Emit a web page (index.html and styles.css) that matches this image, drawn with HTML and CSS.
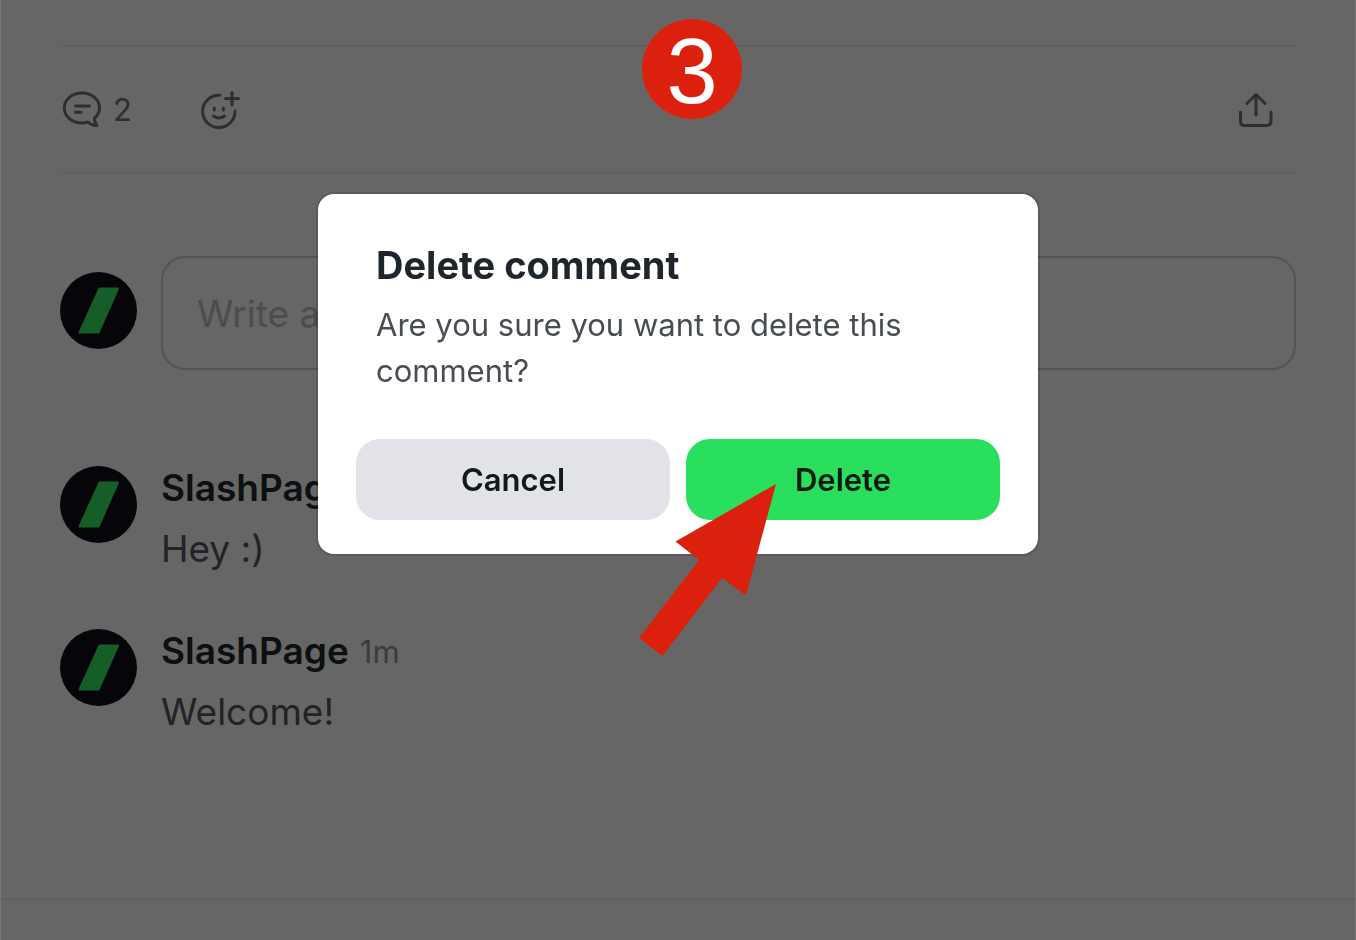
FILE: index.html
```html
<!DOCTYPE html>
<html lang="en">
<head>
<meta charset="utf-8">
<meta name="viewport" content="width=device-width, initial-scale=1">
<title>Delete comment</title>
<link rel="stylesheet" href="styles.css">
</head>
<body>
<svg class="defs" aria-hidden="true">
  <symbol id="slash" viewBox="0 0 77 77">
    <circle cx="38.5" cy="38.5" r="38.5" fill="#0f111a"/>
    <path d="M39.500 16.500H58L38.500 60.500H19.500Z" fill="#36ea62" stroke="#36ea62" stroke-width="2" stroke-linejoin="round"/>
  </symbol>
</svg>
<main class="page">
  <div class="toolbar">
    <button class="tool" type="button" aria-label="Comments, 2">
      <svg class="icon" viewBox="0 0 44 44"><path d="M22 5C12 5 4.300 11.500 4.300 20S12 35 22 35C24 35 26 34.800 28 34C30.500 36.500 33.500 38 37 37.500C35 35 34.200 32.500 34.500 30C37.500 27.500 39.500 24 39.500 20C39.500 11.500 32 5 22 5Z"/><path d="M15.500 18H29.500M15.500 24.300H21"/></svg>
      <span>2</span>
    </button>
    <button class="tool" type="button" aria-label="Add reaction">
      <svg class="icon" viewBox="0 0 44 44"><path d="M22 7.200A16.200 16.200 0 1 0 37 23M34 4.500V17M27.500 10.500H40.500"/><path d="M15.500 28Q21 32 26.500 28M16.300 20V22M25.300 20V22"/></svg>
    </button>
    <button class="tool share" type="button" aria-label="Share">
      <svg class="icon" viewBox="0 0 44 44"><path d="M22 27V7M13 15.500L22 6.500L31 15.500M6.500 24V33Q6.500 37.500 11 37.500H32.500Q37 37.500 37 33V24"/></svg>
    </button>
  </div>
  <div class="composer">
    <svg class="avatar" aria-hidden="true"><use href="#slash"/></svg>
    <input class="field" type="text" placeholder="Write a comment" aria-label="Write a comment">
  </div>
  <section class="comments">
    <article class="comment">
      <svg class="avatar" aria-hidden="true"><use href="#slash"/></svg>
      <div class="body">
        <div class="head"><strong class="name">SlashPage</strong><time class="time">1m</time></div>
        <p class="text">Hey :)</p>
      </div>
    </article>
    <article class="comment">
      <svg class="avatar" aria-hidden="true"><use href="#slash"/></svg>
      <div class="body">
        <div class="head"><strong class="name">SlashPage</strong><time class="time">1m</time></div>
        <p class="text">Welcome!</p>
      </div>
    </article>
  </section>
</main>
<footer class="footer"></footer>
<div class="overlay">
  <div class="dialog" role="dialog" aria-modal="true" aria-labelledby="dialog-title">
    <div class="copy">
      <h1 class="title" id="dialog-title">Delete comment</h1>
      <p class="message">Are you sure you want to delete this comment?</p>
    </div>
    <div class="actions">
      <button class="button" type="button">Cancel</button>
      <button class="button primary" type="button">Delete</button>
    </div>
    <svg class="arrow" viewBox="0 0 137 172" aria-hidden="true"><path d="M137 0L36.500 57.500L60 76L0 154L23.500 172L83 94L107 111.500Z" fill="#dc200e"/></svg>
  </div>
  <div class="step">3</div>
</div>
</body>
</html>
```
FILE: styles.css
```css
* { box-sizing: border-box; }
body {
  margin: 0;
  min-height: 100vh;
  background: #fff;
  color: #22282c;
  font-family: Inter, "Liberation Sans", sans-serif;
}
h1, p { margin: 0; }
button, input { font: inherit; color: inherit; }
.defs { position: absolute; width: 0; height: 0; }
.page { padding: 45px 60px 0; min-height: 898px; }
.toolbar {
  display: flex;
  align-items: center;
  gap: 66px;
  height: 129px;
  border: solid #f1f1f1;
  border-width: 2px 0;
}
.tool {
  display: flex;
  align-items: center;
  gap: 9px;
  padding: 0;
  border: 0;
  background: none;
  color: #72747a;
  font-size: 31px;
  line-height: 44px;
}
.share { margin: 0 18px 0 auto; }
.icon {
  width: 44px;
  height: 44px;
  fill: none;
  stroke: currentColor;
  stroke-width: 3;
  stroke-linecap: round;
  stroke-linejoin: round;
}
.composer {
  display: flex;
  align-items: flex-start;
  gap: 24px;
  margin-top: 82px;
}
.avatar { flex: none; width: 77px; height: 77px; }
.composer .avatar { margin-top: 16px; }
.field {
  flex: 1;
  min-width: 0;
  height: 114px;
  padding: 0 34px;
  border: 2px solid #d0d0d0;
  border-radius: 24px;
  background: none;
  font-size: 37px;
}
.field::placeholder { color: #bcbec1; opacity: 1; }
.comments {
  display: grid;
  gap: 46px;
  margin-top: 92px;
}
.comment { display: flex; gap: 24px; }
.comment .avatar { margin-top: 4px; }
.head { display: flex; align-items: center; gap: 11px; }
.name { font-size: 37px; line-height: 52px; font-weight: 600; }
.time { color: #94959a; font-size: 31px; }
.text { margin-top: 4px; color: #55585f; font-size: 37px; line-height: 61px; }
.footer { border-top: 2px solid #f1f1f1; }
.overlay {
  position: fixed;
  inset: 0;
  padding-top: 194px;
  border: solid rgba(255, 255, 255, 0.1);
  border-width: 0 1px;
  background: rgba(0, 0, 0, 0.6);
}
.dialog {
  position: relative;
  max-width: 720px;
  margin: 0 auto;
  padding: 46px 38px 34px;
  border-radius: 16px;
  background: #fff;
  box-shadow: 0 0 0 2px rgba(0, 0, 0, 0.12);
}
.copy { padding: 0 20px; }
.title { color: #1f252d; font-size: 38px; line-height: 50px; font-weight: 700; }
.message { margin-top: 12px; color: #484c54; font-size: 31px; line-height: 46px; }
.actions { display: flex; gap: 16px; margin-top: 45px; }
.button {
  flex: 1;
  height: 81px;
  padding: 0;
  border: 0;
  border-radius: 24px;
  background: #e2e3e9;
  color: #12181d;
  font-size: 31px;
  font-weight: 600;
}
.primary { background: #29df5d; color: #08180d; }
.arrow {
  position: absolute;
  left: 321px;
  top: 290px;
  width: 137px;
  height: 172px;
}
.step {
  position: absolute;
  top: 19px;
  left: calc(50% - 36px);
  width: 100px;
  height: 100px;
  border-radius: 50%;
  background: #dc200e;
  color: #fff;
  font: 92px/104px "Liberation Sans", sans-serif;
  text-align: center;
}
```
